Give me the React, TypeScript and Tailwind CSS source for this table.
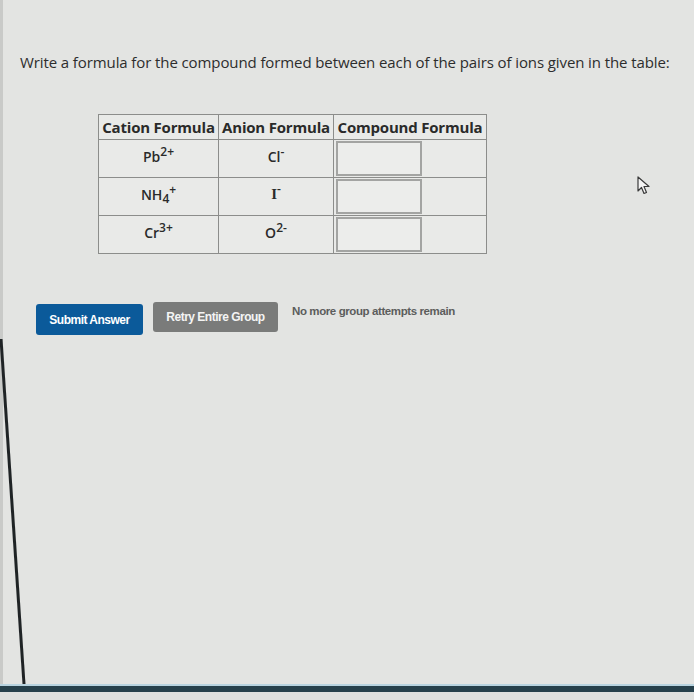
const rows = [
  { cation: "Pb", cSub: "", cSup: "2+", anion: "Cl", aSup: "-", serif: false },
  { cation: "NH", cSub: "4", cSup: "+", anion: "I", aSup: "-", serif: true },
  { cation: "Cr", cSub: "", cSup: "3+", anion: "O", aSup: "2-", serif: false },
];

const Cursor = () => (
  <svg width="14" height="20" viewBox="0 0 14 20" className="mt-[6px]">
    <path
      d="M1 1 L1 15 L4.5 11.5 L7 17.5 L9.5 16.5 L7 10.5 L12 10.5 Z"
      fill="#f4f4f4"
      stroke="#3a3a3a"
      strokeWidth="1.2"
      strokeLinejoin="round"
    />
  </svg>
);

// tilted edge of the monitor bezel seen in the photo
const BezelEdge = () => (
  <svg className="h-full w-[40px]" viewBox="0 0 40 100" preserveAspectRatio="none">
    <line x1="1" y1="0" x2="24" y2="100" stroke="#1f2325" strokeWidth="3" vectorEffect="non-scaling-stroke" />
  </svg>
);

export default function App() {
  return (
    <div className="flex h-[700px] w-[694px] flex-col overflow-hidden bg-[#e3e4e2] font-['Open_Sans',sans-serif] text-[#2d2d2d]">
      <div className="flex flex-1 flex-col border-l-[3px] border-[#c9cac8]">
        <p className="ml-[17px] mt-[52px] text-[15px] leading-5 tracking-[-0.1px]">
          Write a formula for the compound formed between each of the pairs of ions given in the table:
        </p>

        <div className="ml-[95px] mt-[42px] flex items-start">
          <table className="border-collapse border border-[#8c8d8b] bg-[#e9eae8] text-[#2a2a2a]">
            <thead>
              <tr className="h-[25px]">
                <th className="w-[120px] border border-[#8c8d8b] px-0 text-[15px] font-bold leading-none tracking-[-0.2px]">
                  Cation Formula
                </th>
                <th className="w-[115px] border border-[#8c8d8b] px-0 text-[15px] font-bold leading-none tracking-[-0.2px]">
                  Anion Formula
                </th>
                <th className="w-[153px] border border-[#8c8d8b] px-0 text-[15px] font-bold leading-none tracking-[-0.2px]">
                  Compound Formula
                </th>
              </tr>
            </thead>
            <tbody>
              {rows.map((r) => (
                <tr key={r.cation} className="h-[38px]">
                  <td className="border border-[#8c8d8b] pb-[4px] text-center text-[14px] font-semibold">
                    {r.cation}
                    {r.cSub && <sub className="text-[12px]">{r.cSub}</sub>}
                    <sup className="text-[12px]">{r.cSup}</sup>
                  </td>
                  <td className="border border-[#8c8d8b] pb-[4px] text-center text-[14px] font-semibold">
                    <span className={r.serif ? "font-['Liberation_Serif',serif] text-[15px]" : ""}>
                      {r.anion}
                    </span>
                    <sup className="text-[12px]">{r.aSup}</sup>
                  </td>
                  <td className="border border-[#8c8d8b] px-[2px] py-[1px]">
                    <div className="h-[35px] w-[86px] border-2 border-[#a3a4a2] bg-[#ecedeb]" />
                  </td>
                </tr>
              ))}
            </tbody>
          </table>
          <div className="ml-[150px] mt-[56px]">
            <Cursor />
          </div>
        </div>

        <div className="ml-[33px] mt-[48px] flex items-start gap-[10px] font-['Liberation_Sans',sans-serif]">
          <button className="mt-[2px] h-[31px] w-[107px] rounded-[3px] bg-[#0b5a9a] text-[12px] font-bold tracking-[-0.5px] text-white">
            Submit Answer
          </button>
          <button className="h-[30px] w-[125px] rounded-[3px] bg-[#7a7b7a] text-[12px] font-bold tracking-[-0.5px] text-[#f4f4f4]">
            Retry Entire Group
          </button>
          <span className="ml-[4px] mt-[1px] text-[11.5px] font-bold tracking-[-0.4px] text-[#5c5d5c]">
            No more group attempts remain
          </span>
        </div>

        <div className="-ml-[3px] mt-[4px] flex-1">
          <BezelEdge />
        </div>
      </div>
      <div className="h-[2px] bg-[#b8d3df]" />
      <div className="h-[6px] bg-[#26404b]" />
      <div className="h-[8px] bg-[#dfe0de]" />
    </div>
  );
}
